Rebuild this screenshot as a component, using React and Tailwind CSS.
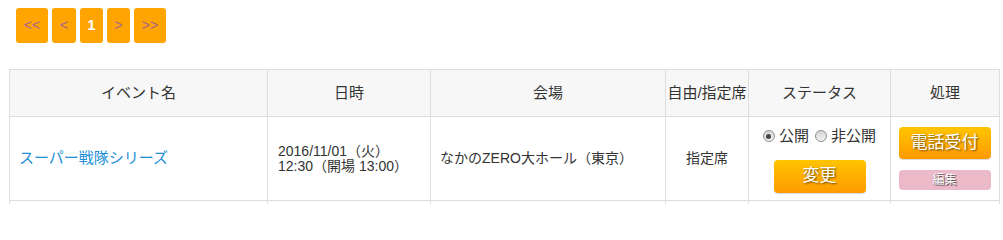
import React from 'react';

const font = { fontFamily: '"Liberation Sans", "Noto Sans CJK JP", sans-serif' };

const Pager = () => {
  const items = [
    { label: '<<', w: 'w-[32px]' },
    { label: '<', w: 'w-[24px]' },
    { label: '1', w: 'w-[23px]', current: true },
    { label: '>', w: 'w-[23px]' },
    { label: '>>', w: 'w-[32px]' },
  ];

  return (
    <div className="flex gap-[4px] pl-[16px] pt-[8px]">
      {items.map((item, i) => (
        <a
          key={i}
          className={`${item.w} h-[35px] flex items-center justify-center rounded-[3px] bg-[#ffa400] ${
            item.current ? 'text-white font-bold text-[15px]' : 'text-[#a8678a] text-[14px]'
          }`}
        >
          {item.label}
        </a>
      ))}
    </div>
  );
};

// windows-ish radio look from the screenshot
const Radio = ({ checked }) => (
  <span className="w-[12px] h-[12px] rounded-full border border-[#8f8f8f] bg-gradient-to-b from-[#d4d4d4] to-[#f4f4f4] flex items-center justify-center">
    {checked && <span className="w-[5px] h-[5px] rounded-full bg-[#444]" />}
  </span>
);

const App = () => {
  return (
    <div className="w-[1003px] h-[204px] bg-white overflow-hidden" style={font}>
      <Pager />

      {/* Event list */}
      <table className="mt-[26px] ml-[9px] w-[990px] table-fixed border-collapse text-[#333] text-[14px]">
        <colgroup>
          <col className="w-[258px]" />
          <col className="w-[163px]" />
          <col className="w-[235px]" />
          <col className="w-[83px]" />
          <col className="w-[142px]" />
          <col className="w-[109px]" />
        </colgroup>
        <thead>
          <tr className="h-[47px] bg-[#f7f7f7] text-[15px]">
            <th className="border border-[#dddddd] font-normal">イベント名</th>
            <th className="border border-[#dddddd] font-normal">日時</th>
            <th className="border border-[#dddddd] font-normal">会場</th>
            <th className="border border-[#dddddd] font-normal">自由/指定席</th>
            <th className="border border-[#dddddd] font-normal">ステータス</th>
            <th className="border border-[#dddddd] font-normal">処理</th>
          </tr>
        </thead>
        <tbody>
          <tr className="h-[84px]">
            <td className="border border-[#dddddd] pl-[9px]">
              <a className="text-[#1e90d8] text-[15px]">スーパー戦隊シリーズ</a>
            </td>
            <td className="border border-[#dddddd] pl-[10px] text-[14px] leading-[15px]">
              2016/11/01（火）
              <br />
              12:30（開場 13:00）
            </td>
            <td className="border border-[#dddddd] pl-[9px]">なかのZERO大ホール（東京）</td>
            <td className="border border-[#dddddd] text-center">指定席</td>
            <td className="border border-[#dddddd] align-top">
              <div className="flex flex-col items-center pt-[8px]">
                <label className="flex items-center text-[15px]">
                  <Radio checked />
                  <span className="ml-[4px]">公開</span>
                  <span className="ml-[6px]">
                    <Radio />
                  </span>
                  <span className="ml-[4px]">非公開</span>
                </label>
                <button className="mt-[12px] w-[92px] h-[33px] rounded-[4px] bg-gradient-to-b from-[#ffc400] to-[#ff9a00] text-white text-[17px] [text-shadow:1px_1px_2px_rgba(0,0,0,0.6)] shadow-[0_1px_1px_rgba(0,0,0,0.15)]">
                  変更
                </button>
              </div>
            </td>
            <td className="border border-[#dddddd] align-top">
              <div className="flex flex-col items-center pt-[10px] pr-[1px]">
                <button className="w-[92px] h-[32px] rounded-[4px] bg-gradient-to-b from-[#ffc400] to-[#ff9a00] text-white text-[17px] [text-shadow:1px_1px_2px_rgba(0,0,0,0.6)] shadow-[0_1px_1px_rgba(0,0,0,0.15)]">
                  電話受付
                </button>
                <button className="mt-[11px] w-[92px] h-[20px] rounded-[4px] bg-[#ebb9c8] text-white text-[12px] leading-none [text-shadow:1px_1px_1px_rgba(0,0,0,0.7)]">
                  編集
                </button>
              </div>
            </td>
          </tr>
          {/* next row, cut off by the window */}
          <tr className="h-[40px]">
            <td className="border border-[#dddddd]" />
            <td className="border border-[#dddddd]" />
            <td className="border border-[#dddddd]" />
            <td className="border border-[#dddddd]" />
            <td className="border border-[#dddddd]" />
            <td className="border border-[#dddddd]" />
          </tr>
        </tbody>
      </table>
    </div>
  );
};

export default App;
